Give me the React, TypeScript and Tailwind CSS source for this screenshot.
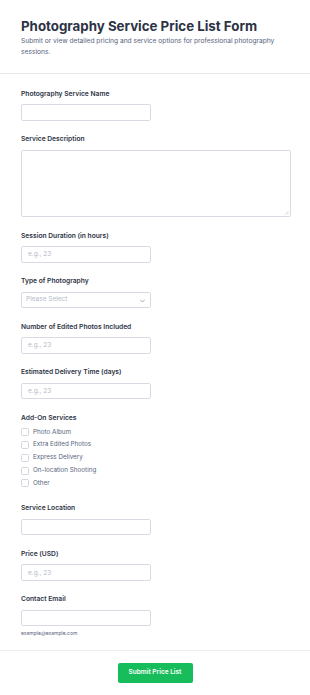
import React from "react";

const addOns = ["Photo Album", "Extra Edited Photos", "Express Delivery", "On-location Shooting", "Other"];

const Label: React.FC<{ text: string; tight?: boolean }> = ({ text, tight }) => (
  <label
    className={
      "block text-[6.7px] leading-[9px] font-semibold text-[#2c3345] " + (tight ? "mb-[3.5px]" : "mb-[5.5px]")
    }
  >
    {text}
  </label>
);

const TextInput: React.FC<{ placeholder?: string }> = ({ placeholder }) => (
  <input
    type="text"
    placeholder={placeholder}
    className="block w-[130px] h-[16.5px] px-[6px] text-[6.5px] text-[#2c3345] placeholder:text-[#b4bac7] border border-[#d8dbe3] rounded-[2px] bg-white outline-none"
  />
);

const App: React.FC = () => {
  return (
    <div className="w-[310px] min-h-[695px] bg-white" style={{ fontFamily: "Inter, 'Noto Sans', sans-serif" }}>
      <div className="px-[21px] pt-[17px] pb-[15px] border-b border-[#e6e8ee]">
        <h1 className="text-[13.3px] leading-[18px] font-bold text-[#2c3345]">
          Photography Service Price List Form
        </h1>
        <p className="text-[6.65px] leading-[11px] text-[#57647e] mt-[0.5px] pr-[14px]">
          Submit or view detailed pricing and service options for professional photography sessions.
        </p>
      </div>

      <form className="px-[21px] pt-[16px] pb-[13px] border-b border-[#eceef2] flex flex-col gap-[14.5px]">
        <div>
          <Label text="Photography Service Name" />
          <TextInput />
        </div>

        <div>
          <Label text="Service Description" />
          <div className="relative w-[270px] h-[67.5px]">
            <textarea className="block w-full h-full border border-[#d8dbe3] rounded-[2px] outline-none resize-none" />
            {/* resize grip */}
            <svg className="absolute right-[2px] bottom-[2px]" width="5" height="5" viewBox="0 0 5 5">
              <path d="M4.5 1L1 4.5M4.5 3L3 4.5" stroke="#c3c8d2" strokeWidth="0.7" />
            </svg>
          </div>
        </div>

        <div>
          <Label text="Session Duration (in hours)" />
          <TextInput placeholder="e.g., 23" />
        </div>

        <div>
          <Label text="Type of Photography" />
          <div className="relative w-[130px] h-[16.5px] border border-[#d8dbe3] rounded-[2px] bg-white flex items-center px-[4px]">
            <span className="text-[6.5px] text-[#b4bac7]">Please Select</span>
            <svg className="absolute right-[5px] top-[6px]" width="5" height="4" viewBox="0 0 10 6" fill="none">
              <path d="M1 1l4 4 4-4" stroke="#8a93a6" strokeWidth="1.6" strokeLinecap="round" strokeLinejoin="round" />
            </svg>
          </div>
        </div>

        <div>
          <Label text="Number of Edited Photos Included" />
          <TextInput placeholder="e.g., 23" />
        </div>

        <div>
          <Label text="Estimated Delivery Time (days)" />
          <TextInput placeholder="e.g., 23" />
        </div>

        <div>
          <Label text="Add-On Services" tight />
          <div className="flex flex-col">
            {addOns.map(opt => (
              <div key={opt} className="flex items-center h-[12.75px]">
                <span className="w-[8px] h-[8px] border border-[#d3d6df] rounded-[1.5px] bg-white mr-[4px]" />
                <span className="text-[6.3px] text-[#57647e]">{opt}</span>
              </div>
            ))}
          </div>
        </div>

        <div>
          <Label text="Service Location" />
          <TextInput />
        </div>

        <div>
          <Label text="Price (USD)" />
          <TextInput placeholder="e.g., 23" />
        </div>

        <div>
          <Label text="Contact Email" />
          <TextInput />
          <p className="text-[5px] leading-[7px] text-[#57647e] mt-[4px]">example@example.com</p>
        </div>
      </form>

      <div className="flex justify-center pt-[12px]">
        <button
          type="button"
          className="w-[75px] h-[20px] bg-[#18bd5b] text-white text-[6.5px] font-semibold rounded-[2px]"
        >
          Submit Price List
        </button>
      </div>
    </div>
  );
};

export default App;
